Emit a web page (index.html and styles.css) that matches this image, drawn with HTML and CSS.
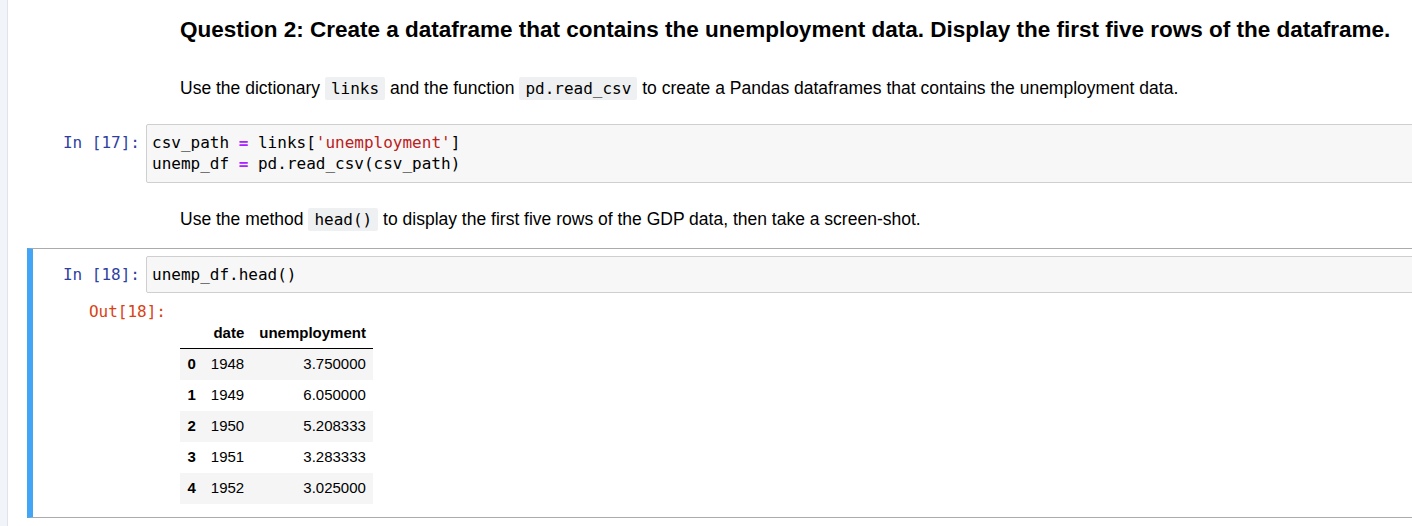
FILE: index.html
```html
<!DOCTYPE html>
<html lang="en">
<head>
<meta charset="utf-8">
<title>Notebook</title>
<link rel="stylesheet" href="styles.css">
</head>
<body>
<div class="page">
  <div class="gutter"></div>
  <div class="notebook">
    <div class="cell md-cell first">
      <div class="md">
        <h3>Question 2: Create a dataframe that contains the unemployment data. Display the first five rows of the dataframe.</h3>
        <p class="p1">Use the dictionary <code>links</code> and the function <code>pd.read_csv</code> to create a Pandas dataframes that contains the unemployment data.</p>
      </div>
    </div>
    <div class="cell code-cell">
      <div class="in-row">
        <div class="prompt in">In&nbsp;[17]:</div>
        <div class="input-area"><pre>csv_path <span class="op">=</span> links[<span class="str">'unemployment'</span>]
unemp_df <span class="op">=</span> pd.read_csv(csv_path)</pre></div>
      </div>
    </div>
    <div class="cell md-cell">
      <div class="md">
        <p>Use the method <code>head()</code> to display the first five rows of the GDP data, then take a screen-shot.</p>
      </div>
    </div>
    <div class="cell code-cell selected">
      <div class="in-row">
        <div class="prompt in">In&nbsp;[18]:</div>
        <div class="input-area"><pre>unemp_df.head()</pre></div>
      </div>
      <div class="out-row">
        <div class="prompt out">Out[18]:</div>
        <div class="out-content">
          <table class="df">
            <thead>
              <tr><th></th><th>date</th><th>unemployment</th></tr>
            </thead>
            <tbody>
              <tr><th>0</th><td>1948</td><td>3.750000</td></tr>
              <tr><th>1</th><td>1949</td><td>6.050000</td></tr>
              <tr><th>2</th><td>1950</td><td>5.208333</td></tr>
              <tr><th>3</th><td>1951</td><td>3.283333</td></tr>
              <tr><th>4</th><td>1952</td><td>3.025000</td></tr>
            </tbody>
          </table>
        </div>
      </div>
    </div>
  </div>
</div>
</body>
</html>
```

FILE: styles.css
```css
html, body {
  margin: 0;
  padding: 0;
  background: #ffffff;
  overflow: hidden;
}

body {
  font-family: "Liberation Sans", Arial, sans-serif;
  color: #000;
}

.page {
  display: flex;
  width: 1460px;
  height: 526px;
}

.gutter {
  flex: none;
  width: 7px;
  background: #f1f4f9;
  border-right: 1px solid #e0e4ea;
}

.notebook {
  flex: 1;
  padding: 9px 0 0 19px;
}

.cell {
  border: 1px solid transparent;
  border-left-width: 6px;
  padding: 7px 0;
}

.cell + .cell {
  margin-top: 9px;
}

.cell.selected {
  margin-top: 10px;
  border-color: #ababab;
  border-left-color: #42a5f5;
  padding-bottom: 13px;
}

.md {
  padding-left: 147px;
  white-space: nowrap;
}

.md h3 {
  margin: 0;
  font-size: 22.5px;
  line-height: 26px;
  font-weight: bold;
}

.md p {
  margin: 0;
  font-size: 17.5px;
  line-height: 22px;
}

.md p.p1 {
  margin-top: 34px;
}

.md code {
  font-family: "DejaVu Sans Mono", monospace;
  font-size: 16px;
  line-height: 1;
  background: #eff0f1;
  padding: 2px 6px;
  border-radius: 2px;
}

.in-row {
  display: flex;
  align-items: flex-start;
}

.prompt {
  flex: none;
  font-family: "DejaVu Sans Mono", monospace;
  font-size: 16px;
  line-height: 21.25px;
  text-align: right;
  white-space: nowrap;
}

.prompt.in {
  width: 107px;
  padding-right: 6px;
  padding-top: 8px;
  color: #303f9f;
}

.input-area {
  flex: 1;
  background: #f7f7f7;
  border: 1px solid #cfcfcf;
  border-radius: 2px;
  padding: 7px 5px;
}

.input-area pre {
  margin: 0;
  font-family: "DejaVu Sans Mono", monospace;
  font-size: 16px;
  line-height: 21.25px;
  color: #000;
}

.op {
  color: #aa22ff;
  font-weight: bold;
}

.str {
  color: #ba2121;
}

.out-row {
  display: flex;
  align-items: flex-start;
  margin-top: 8px;
}

.prompt.out {
  width: 133px;
  color: #d84315;
}

.out-content {
  padding-left: 14px;
  padding-top: 17px;
}

.df {
  border-collapse: collapse;
  font-family: "Liberation Sans", Arial, sans-serif;
  font-size: 15px;
  color: #000;
}

.df th,
.df td {
  padding: 7.5px;
  line-height: 16px;
  text-align: right;
  vertical-align: middle;
}

.df thead th {
  padding: 7px 7.5px;
  font-weight: bold;
  border-bottom: 1px solid #000;
}

.df tbody th {
  font-weight: bold;
}

.df tbody tr:nth-child(odd) {
  background: #f5f5f5;
}
```
